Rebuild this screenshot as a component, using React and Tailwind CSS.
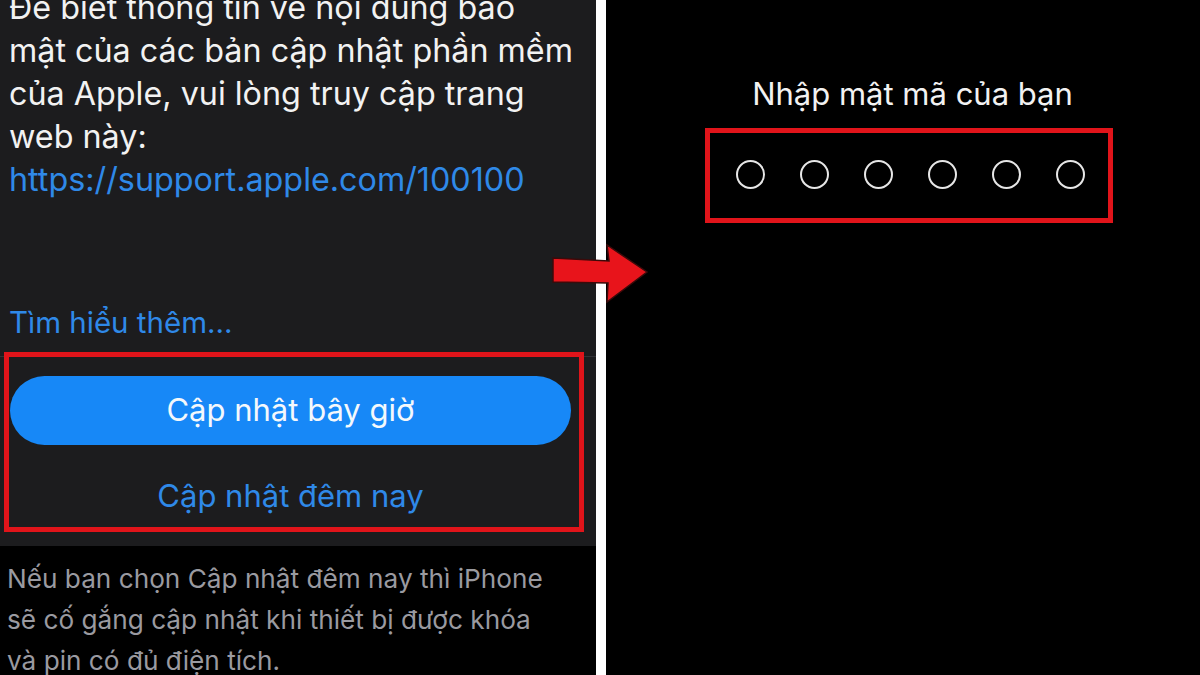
import React from "react";

const sans = { fontFamily: "Inter, 'Noto Sans', 'Liberation Sans', sans-serif" };

function PasscodeDots() {
  return (
    <div className="flex items-center gap-[35px]">
      {[0, 1, 2, 3, 4, 5].map((i) => (
        <span
          key={i}
          className="block h-[29px] w-[29px] rounded-full border-2 border-[#e6e6e6]"
        />
      ))}
    </div>
  );
}

function Arrow() {
  return (
    <svg
      className="absolute left-[548px] top-[238px]"
      width="104"
      height="70"
      viewBox="548 238 104 70"
    >
      <polygon
        points="553,258 609,261 607,245 647,272 607,302 608,283 553,282"
        fill="#e8141b"
        stroke="#3b0a0a"
        strokeWidth="1.5"
        strokeLinejoin="miter"
      />
    </svg>
  );
}

export default function App() {
  return (
    <div
      className="relative flex h-[675px] w-[1200px] overflow-hidden bg-white"
      style={sans}
    >
      {/* Software update sheet */}
      <div className="flex w-[596px] shrink-0 flex-col bg-black">
        <div className="flex h-[546px] shrink-0 flex-col bg-[#1c1c1e]">
          <div className="mt-[-14px] pl-[9px] text-[32.3px] leading-[43px] text-[#f2f2f2]">
            <p>Để biết thông tin về nội dung bảo</p>
            <p>mật của các bản cập nhật phần mềm</p>
            <p>của Apple, vui lòng truy cập trang</p>
            <p>web này:</p>
            <p className="text-[#2f89e8]">https://support.apple.com/100100</p>
          </div>
          <p className="mt-[100px] pl-[9px] text-[29.5px] leading-[43px] text-[#2f89e8]">
            Tìm hiểu thêm...
          </p>
          <div className="mt-[12px] h-px bg-[#323236]" />
          <div className="flex flex-col items-center pl-[10px] pr-[25px] pt-[19px]">
            <button className="flex h-[69px] w-full items-center justify-center rounded-full bg-[#1788f7] text-[31px] text-[#f4f8fc]">
              Cập nhật bây giờ
            </button>
            <p className="mt-[30px] text-[31px] leading-[42px] text-[#2f89e8]">
              Cập nhật đêm nay
            </p>
          </div>
        </div>
        <div className="pl-[7px] pt-[12px] text-[26.2px] leading-[41px] text-[#9a9aa0]">
          <p>Nếu bạn chọn Cập nhật đêm nay thì iPhone</p>
          <p>sẽ cố gắng cập nhật khi thiết bị được khóa</p>
          <p>và pin có đủ điện tích.</p>
        </div>
      </div>

      <div className="w-[10px] shrink-0 bg-white" />

      {/* Passcode screen */}
      <div className="flex flex-1 flex-col items-center bg-black">
        <p className="mt-[74px] pl-[19px] text-[31px] leading-[40px] text-[#f2f2f2]">
          Nhập mật mã của bạn
        </p>
        <div className="mt-[46px] ml-[14px] flex h-[29px] items-center">
          <PasscodeDots />
        </div>
      </div>

      {/* Highlight frames */}
      <div className="pointer-events-none absolute left-[4px] top-[352px] h-[180px] w-[580px] border-[5px] border-[#e0141a]" />
      <div className="pointer-events-none absolute left-[705px] top-[128px] h-[95px] w-[408px] border-[5px] border-[#e0141a]" />

      <Arrow />
    </div>
  );
}
